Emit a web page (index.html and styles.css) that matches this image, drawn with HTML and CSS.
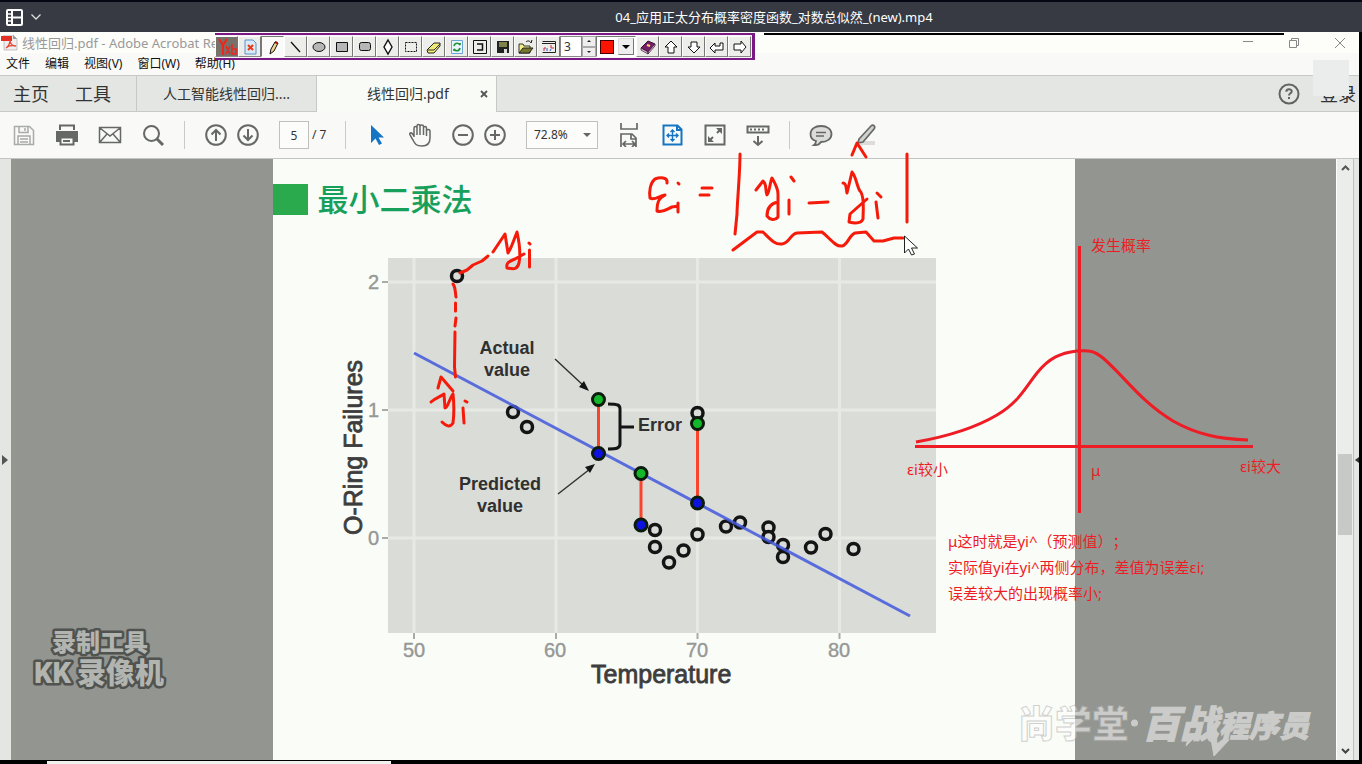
FILE: index.html
```html
<!DOCTYPE html>
<html lang="zh-CN">
<head>
<meta charset="utf-8">
<title>04_应用正太分布概率密度函数_对数总似然_(new).mp4</title>
<link rel="stylesheet" href="styles.css">
</head>
<body>
<header class="player-bar">
  <button class="player-menu" aria-label="播放列表">
    <svg width="17" height="17" viewBox="0 0 17 17" fill="none" stroke="#fff" stroke-width="2"><rect x="1" y="1" width="15" height="15" rx="1"/><path d="M6 1v15M6 8.500h10"/><path d="M1 5h4M1 8.500h4M1 12h4" stroke-width="1.500"/></svg>
    <svg width="10" height="6" viewBox="0 0 10 6" fill="none" stroke="#ddd" stroke-width="1.300"><path d="M.5 .5 5 5 9.500 .5"/></svg>
  </button>
  <h1 class="player-title">04_应用正太分布概率密度函数_对数总似然_(new).mp4</h1>
</header>

<main class="reader">
  <div class="title-bar">
    <svg width="17" height="16" viewBox="0 0 17 16"><path d="M3 0h9l4 4v11H3z" fill="#eee" stroke="#aaa" stroke-width=".7"/><path d="M0 1h11v5H0z" fill="#e33225"/><path d="M12 0v4h4" fill="#999"/><path d="M5 13c3-2 4-5 4-8 0 4 3 6 6 6-4-1-8 0-10 2z" fill="none" stroke="#e64c38" stroke-width="1.300"/></svg>
    <span class="file-name">线性回归.pdf - Adobe Acrobat Re</span>
    <span class="capture-edge"></span>
    <div class="window-buttons">
      <button aria-label="最小化"><svg width="12" height="12" stroke="#888"><path d="M1 4.500h10"/></svg></button>
      <button aria-label="还原"><svg width="12" height="12" fill="none" stroke="#888"><path d="M1.500 3.500h7v7h-7zM3.500 3.500v-2h7v7h-2"/></svg></button>
      <button aria-label="关闭"><svg width="12" height="12" stroke="#888"><path d="m1 1 10 10M11 1 1 11"/></svg></button>
    </div>
  </div>
  <nav class="menu-bar">
    <button>文件</button><button>编辑</button><button>视图(V)</button><button>窗口(W)</button><button>帮助(H)</button>
  </nav>
  <nav class="tab-bar">
    <div class="home-tabs"><button>主页</button><button>工具</button></div>
    <button class="tab">人工智能线性回归....</button>
    <button class="tab tab-active">线性回归.pdf<svg class="tab-close" width="8" height="8" stroke="#555" stroke-width="1.800"><path d="m1 1 6 6M7 1 1 7"/></svg></button>
    <div class="account">
      <button aria-label="帮助"><svg width="22" height="22" fill="none" stroke="#626462" stroke-width="2"><circle cx="11" cy="11" r="9.500"/><path d="M8.300 8.800c0-3.500 5.400-3.400 5.400-.4 0 1.900-2.700 1.900-2.700 4M11 14v2"/></svg></button>
      <button class="login">登录</button>
    </div>
  </nav>

  <div class="tool-bar">
    <button aria-label="保存"><svg viewBox="0 0 24 24" stroke="#a9aba8"><path d="M2.500 3.500h15l4 4v14h-19zM7 3.500v6h9v-6M13 5v3M6 21v-8h12v8M8 16h8M8 19h8" stroke-width="1.500"/></svg></button>
    <button aria-label="打印"><svg viewBox="0 0 24 24"><path d="M5 7V2.500h14V7"/><path d="M1 8h22v11h-4v-4H5v4H1z" fill="#666865" stroke="none"/><path d="M5.500 14.500h13v7h-13zM8 18h7" fill="#fafaf7"/></svg></button>
    <button aria-label="邮件"><svg viewBox="0 0 24 24"><path d="M1.500 4.500h21v15h-21zM2 5l10 8 10-8M2 19l7-8M22 19l-7-8" stroke-width="1.500"/></svg></button>
    <button aria-label="查找"><svg viewBox="0 0 24 24"><circle cx="10.500" cy="10.500" r="7.500"/><path d="m16 16 6 6" stroke-width="3"/></svg></button>
    <i class="rule"></i>
    <div class="pair">
      <button aria-label="上一页"><svg viewBox="0 0 24 24"><circle cx="12" cy="12" r="9.800"/><path d="M12 18V7M7.500 11.500 12 7l4.500 4.500"/></svg></button>
      <button aria-label="下一页"><svg viewBox="0 0 24 24"><circle cx="12" cy="12" r="9.800"/><path d="M12 6v11M7.500 12.500 12 17l4.500-4.500"/></svg></button>
    </div>
    <label class="page-number"><input type="text" value="5" aria-label="页码"><span>/ 7</span></label>
    <i class="rule"></i>
    <button aria-label="选择"><svg viewBox="0 0 24 24" stroke="none"><path d="M6 2v18l4.500-4.500L14 22l3-1.500-3.500-6H19z" fill="#1674c4"/></svg></button>
    <button aria-label="手形"><svg viewBox="0 0 24 24"><path d="M6 14V5c0-2 3-2 3 0v7M9 5V3c0-2 3-2 3 0v9M12 3.500c0-2 3.500-2 3.500 0V12M15.500 5c0-2 3-2 3 0v8M18.500 8c0-2 3.500-2 3.500 0v7c0 5-2 8-8 8s-7-2-9-6l-3-5c-1-2 1-3 2.500-1L6 13" stroke-width="1.500"/></svg></button>
    <div class="pair">
      <button aria-label="缩小"><svg viewBox="0 0 24 24"><circle cx="12" cy="12" r="9.800"/><path d="M7 12h10"/></svg></button>
      <button aria-label="放大"><svg viewBox="0 0 24 24"><circle cx="12" cy="12" r="9.800"/><path d="M7 12h10M12 7v10"/></svg></button>
    </div>
    <span class="zoom-level"><select aria-label="缩放比例"><option>72.8%</option></select></span>
    <button aria-label="适合宽度"><svg viewBox="0 0 24 24"><path d="M4 0v6h16V0M4 24V11h11l4 4v9M14 11v5h5M6 21h11M9 18l-3 3 3 3M15 18l3 3-3 3" stroke-width="1.700"/></svg></button>
    <button aria-label="适合页面"><svg viewBox="0 0 24 24" stroke="#1674c4"><path d="M3.500 2.500h14l4 4v15h-18zM17 2v5h5"/><path d="M12.500 7v11M7 12.500h11M10.500 9l2-2 2 2M10.500 16l2 2 2-2M9 10.500l-2 2 2 2M16 10.500l2 2-2 2" stroke-width="1.400"/></svg></button>
    <button aria-label="全屏"><svg viewBox="0 0 24 24"><path d="M2.500 2.500h19v19h-19z"/><path d="m6 18 4-4M14 10l4-4"/><path d="M5 13v6h6zM13 5h6v6z" fill="#666865" stroke="none"/></svg></button>
    <button aria-label="滚动"><svg viewBox="0 0 24 24"><path d="M1.500 3.500h21v6h-21zM12 13v9M7.500 18l4.500 4 4.500-4"/><path d="M4 6.500h16" stroke-dasharray="2 2"/></svg></button>
    <i class="rule"></i>
    <button aria-label="注释"><svg viewBox="0 0 24 24"><path d="M12 3c6 0 10.500 3 10.500 8S18 19 12 19c-2 3-4 3.500-7 3 2-1 2-2 2-4-4-1-5.500-4-5.500-7C1.500 6 6 3 12 3z" fill="#dcdddb" stroke-width="1.800"/><path d="M7 9.500h10M7 13h8" stroke-width="1.500"/></svg></button>
    <button aria-label="荧光笔"><svg viewBox="0 0 24 24"><path d="M8 18h15v4H8z" fill="#dedbdb" stroke="none"/><path d="m7 16 12-13c2-2 5 0 3 3L11 19l-5 1z" fill="#d0d2cf" stroke-width="1.700"/></svg></button>
  </div>

  <div class="workspace">
    <button class="side-strip" aria-label="展开左侧面板"><svg width="6" height="10"><path d="M0 0v10l6-5z" fill="#555"/></svg></button>
    <div class="canvas">
      <article class="sheet">
        <h2 class="sheet-title">最小二乘法</h2>
        <svg class="chart" viewBox="340 250 600 440" role="img" aria-label="O-Ring Failures / Temperature">
          <rect x="388" y="258" width="548" height="375" fill="#dadcd8"/>
          <path d="M388 282h548M388 410h548M388 538h548M414 258v375M556 258v375M697.500 258v375M839.500 258v375" stroke="#e7e9e5" stroke-width="3"/>
          <path d="M382 282h6M382 410h6M382 538h6M414 633v6M556 633v6M697.500 633v6M839.500 633v6" stroke="#aaa" stroke-width="2"/>
          <g class="tick-text">
            <text x="368" y="289">2</text><text x="368" y="417">1</text><text x="368" y="545">0</text>
            <text x="403" y="657">50</text><text x="544" y="657">60</text><text x="686" y="657">70</text><text x="828" y="657">80</text>
          </g>
          <g class="axis-text">
            <text x="591" y="683">Temperature</text>
            <text transform="translate(362 535) rotate(-90)">O-Ring Failures</text>
          </g>
          <g class="callout-text">
            <text x="507" y="354">Actual</text><text x="507" y="376">value</text>
            <text x="500" y="490">Predicted</text><text x="500" y="512">value</text>
            <text x="660" y="431">Error</text>
          </g>
          <path d="M598.500 400v53M641 474v51M697.500 424v79" stroke="#f9452c" stroke-width="3"/>
          <g fill="#dadcd8" stroke="#141414" stroke-width="3.500">
            <circle cx="457" cy="276" r="5.500"/><circle cx="513" cy="412" r="5.500"/><circle cx="527" cy="427" r="5.500"/><circle cx="697.500" cy="413" r="5.500"/>
            <circle cx="655" cy="530" r="5.500"/><circle cx="655" cy="547" r="5.500"/><circle cx="669" cy="562.500" r="5.500"/><circle cx="683.500" cy="550.500" r="5.500"/>
            <circle cx="697.500" cy="534.500" r="5.500"/><circle cx="726" cy="526.500" r="5.500"/><circle cx="740" cy="522.500" r="5.500"/><circle cx="768.500" cy="527.500" r="5.500"/>
            <circle cx="768.500" cy="537" r="5.500"/><circle cx="783" cy="545" r="5.500"/><circle cx="783" cy="557" r="5.500"/><circle cx="811" cy="547.500" r="5.500"/>
            <circle cx="825.500" cy="534" r="5.500"/><circle cx="853.500" cy="549" r="5.500"/>
          </g>
          <path d="m414 353 496 263" stroke="#4258dd" stroke-width="3" stroke-opacity=".85"/>
          <g stroke="#0c1c0c" stroke-width="3">
            <circle cx="598.500" cy="399.500" r="6" fill="#12b829"/><circle cx="641" cy="473.500" r="6" fill="#12b829"/><circle cx="697.500" cy="423.500" r="6" fill="#12b829"/>
            <circle cx="598.500" cy="453.500" r="6" fill="#0d12e0"/><circle cx="641" cy="525" r="6" fill="#0d12e0"/><circle cx="697.500" cy="503" r="6" fill="#0d12e0"/>
          </g>
          <path d="M608 404c10 0 12 1 12 5v35c0 4-3 5-12 5M620 427h14" fill="none" stroke="#141414" stroke-width="3"/>
          <path d="m555 359 29 27M558 494l32-25" stroke="#333" stroke-width="1.500"/>
          <path d="m589 391-10-4 5-6zM595 464l-10 3 5 6z" fill="#141414"/>
        </svg>

        <svg class="ink" viewBox="273 159 802 601">
          <g class="pen">
            <path d="m460 273 7-3 6-5 9-4 6-5M493 252l12-18 3 19c4-6 6-14 9-21 2 9 4 21 2 31-2 7-5 6-12 5-1-5 1-6 8-9l9-5M529 243l1 1M529.500 250v17"/>
            <path d="M453 284c3 4 2 9 3 13M455.500 303v8M456 318l-1 8M455 332l-.5 35 1 10M438 388l3-11 12 14M431 402c4-4 9-5 13-8l1 14c3 0 4-9 8-14 1 9 1 21 0 29-3 5-7 3-11-1M465 401l2 1M463 408l1 15"/>
            <path d="M667 183c1-6-7-6-12-4-5 4-6 13-5 19 4 3 9-2 15-3-5 3-8 5-8 16 6 2 10-2 15-4l6-1M678 183l1 1M678 203v9M702 188h10M700 195h9"/>
            <path d="M740 154c0 20-3 50-3 60l-2 20M756 190l7-9c4 3 2 9 4 14 2 0 3-13 5-17 3 5 6 10 6 16v23c-3 4-8 3-11-1 0-10 5-13 11-14M791 177l3 4M789 200v14M809 203l19-1"/>
            <path d="M843 183c4 0 3 7 4 10l5-21c4 4 5 15 8 19 5 5 3 21 3 28-2 5-10 4-14 3l1-8 17-15M877 193l4 4M876 202l2 16M907 154v68M852 155l5-12 9 14"/>
            <path d="m733 250 24-18h6c7 7 12 13 19 12 8-1 8-10 15-11l25-1c8 6 13 15 20 14 6-1 7-11 13-13l11-1 8 9h9l11-3h9"/>
          </g>
          <path d="M904.500 236v17l4-4 3 6 3-1-3-6h6z" fill="#fff" stroke="#222"/>
          <g class="bell">
            <path d="M1079.500 246v267M915 446.500h338"/>
            <path d="M916 442C950 436 975 428 997 415S1025 388 1037 373 1060 353 1077 351c13-1 17 0 26 7 22 19 38 44 70 63 23 13 45 18 75 19"/>
          </g>
          <g class="note-text">
            <text x="1091" y="251">发生概率</text><text x="907" y="475">εi较小</text><text x="1240" y="472">εi较大</text><text x="1091" y="476">μ</text>
            <text x="948" y="547">μ这时就是yi^（预测值）；</text>
            <text x="948" y="573">实际值yi在yi^两侧分布，差值为误差εi;</text>
            <text x="948" y="599">误差较大的出现概率小;</text>
          </g>
          <g class="recorder-mark">
            <text x="52" y="651" font-size="24">录制工具</text>
            <text class="latin-mark" x="34" y="683" font-size="29">KK</text><text x="77" y="684" font-size="29">录像机</text>
          </g>
          <g class="school-mark">
            <text class="school-name" x="1018" y="738" font-size="37">尚学堂</text><circle cx="1134.500" cy="723" r="3.500"/>
            <g class="school-slogan"><text x="1142" y="738" font-size="38">百战</text><text x="1219" y="737" font-size="30">程序员</text>
            <path d="m1189 735-3 11 14-14zM1209 728l5 28 15-16h-7l-5 4-1-16z"/></g>
          </g>
        </svg>
      </article>
    </div>
    <div class="scroll-track">
      <svg width="9" height="6" fill="none" stroke="#555" stroke-width="2"><path d="m1 5 3.500-3.500L8 5"/></svg>
      <span class="track-above"></span><span class="thumb"></span><span class="track-below"></span>
      <svg width="9" height="6" fill="none" stroke="#444" stroke-width="2"><path d="m1 1 3.500 3.500L8 1"/></svg>
    </div>
    <button class="side-strip side-strip-right" aria-label="展开右侧面板"><svg width="4" height="6"><path d="M4 0v6L0 3z" fill="#333"/></svg></button>
  </div>

  <div class="recorder" role="toolbar" aria-label="录屏画笔">
    <button class="brand" aria-label="Yxb"><svg viewBox="0 0 20 18" fill="none" stroke="#f0241b" stroke-width="2.200"><path d="M2 1l4 6 4-6M6 7v10"/><path d="m9 8 4 8M13 8l-4 8M15 6v10h4v-5h-3" stroke-width="1.500"/></svg></button>
    <button aria-label="清除"><svg viewBox="0 0 20 18"><path d="M5 2h8l3 3v11H5z" fill="#d7eafc" stroke="#5d91c8"/><path d="m8 7 5 5M13 7l-5 5" stroke="#ea3a12" stroke-width="2"/></svg></button>
    <button class="pressed" aria-label="铅笔"><svg viewBox="0 0 20 18"><path d="m7 16 1-5 4-7 3 1-4 8z" fill="#f0d494" stroke="#111"/><path d="m12 4 2 1" stroke="#a00" stroke-width="2"/></svg></button>
    <button aria-label="直线"><svg viewBox="0 0 20 18"><path d="m5 4 9 10" stroke="#111" stroke-width="1.300"/></svg></button>
    <button aria-label="椭圆"><svg viewBox="0 0 20 18"><ellipse cx="10" cy="9" rx="6" ry="4.500" fill="#b6b6b6" stroke="#111"/></svg></button>
    <button aria-label="矩形"><svg viewBox="0 0 20 18"><path d="M4.500 4.500h11v9h-11z" fill="#b6b6b6" stroke="#111"/></svg></button>
    <button aria-label="圆角矩形"><svg viewBox="0 0 20 18"><rect x="4.500" y="4.500" width="11" height="8" rx="2" fill="#b6b6b6" stroke="#111"/></svg></button>
    <button aria-label="菱形"><svg viewBox="0 0 20 18"><path d="m10 2 4 7-4 7-4-7z" fill="#fff" stroke="#111" stroke-width="1.400"/></svg></button>
    <button aria-label="选区"><svg viewBox="0 0 20 18"><path d="M4.500 4.500h11v9h-11z" fill="none" stroke="#111" stroke-dasharray="2 1"/></svg></button>
    <button aria-label="橡皮"><svg viewBox="0 0 20 18"><path d="m3 12 7-7h6v3l-6 7H4z" fill="#f1ea79" stroke="#222"/><path d="m4 12h6l6-6" fill="none" stroke="#333"/></svg></button>
    <button aria-label="刷新"><svg viewBox="0 0 20 18"><path d="M4.500 2.500h11v13h-11z" fill="#eaf5ff" stroke="#6aa5d5"/><path d="M7 8c1-4 5-3 6-1V5M13 10c-1 4-5 3-6 1v2" fill="none" stroke="#219531" stroke-width="1.700"/></svg></button>
    <button aria-label="还原"><svg viewBox="0 0 20 18" fill="none" stroke="#111"><path d="M3.500 2.500h13v13h-13z"/><path d="M7 6h5.500v6H7" stroke-width="1.500"/></svg></button>
    <button aria-label="保存画面"><svg viewBox="0 0 20 18"><path d="M4 3h12v12H4z" fill="#222"/><path d="M6 4h8v5H6z" fill="#80824a"/><path d="M11 11h3v4h-3z" fill="#ddd"/></svg></button>
    <button aria-label="打开"><svg viewBox="0 0 20 18"><path d="M3 15V6h4l1 2h6v7z" fill="#f3ef87" stroke="#333"/><path d="m3 15 4-5h10l-4 5z" fill="#77762b" stroke="#222"/><path d="M10 4c2-2 4-1 5 1l1-3" fill="none" stroke="#111"/></svg></button>
    <button aria-label="设置"><svg viewBox="0 0 20 18" fill="none" stroke="#222"><path d="M3.500 3.500h13v11h-13M3 5.500h13"/><path d="M5 13v-3h2M12 7v3h3" stroke="#c72a36"/><path d="M8 13v-3M11 13l1-2" stroke="#285cc9"/></svg></button>
    <input class="pen-size" type="text" value="3" aria-label="画笔粗细">
    <span class="stepper"><button aria-label="增大"><i class="up"></i></button><button aria-label="减小"><i class="down"></i></button></span>
    <button class="pen-color" aria-label="画笔颜色"><span class="swatch"></span><span class="drop"><i></i></span></button>
    <button aria-label="帮助手册"><svg viewBox="0 0 20 18"><path d="m3 10 7-7 7 3-7 8z" fill="#7a1d68" stroke="#301030"/><path d="m3 10 7 4v2l-7-4zM10 14l7-8v2l-7 8z" fill="#e2c7d7" stroke="#301030" stroke-width=".7"/><path d="m9 7 3 1" stroke="#f4e05b" stroke-width="2"/></svg></button>
    <button aria-label="上移"><svg viewBox="0 0 20 18"><path d="m10 3 6 6h-3v6H7V9H4z" fill="#fff" stroke="#111"/></svg></button>
    <button aria-label="下移"><svg viewBox="0 0 20 18"><path d="m10 15 6-6h-3V4H7v5H4z" fill="#fff" stroke="#111"/></svg></button>
    <button aria-label="回车"><svg viewBox="0 0 20 18"><path d="m3 10 5-5v3h5V5h3v7H8v3z" fill="#fff" stroke="#111"/></svg></button>
    <button aria-label="右移"><svg viewBox="0 0 20 18"><path d="m16 9-5-6v3H4v6h7v3z" fill="#fff" stroke="#111"/></svg></button>
  </div>
</main>
<footer class="desktop-edge"><span></span></footer>
</body>
</html>
```
FILE: styles.css
```css
* { box-sizing: border-box; }
body {
  margin: 0;
  height: 100vh;
  display: flex;
  flex-direction: column;
  overflow: hidden;
  background: #000;
  border-top: 2px solid #050812;
  font-family: "Noto Sans", "Noto Sans CJK SC", sans-serif;
  color: #333;
}
button, input, select { font: inherit; color: inherit; border: 0; padding: 0; margin: 0; background: none; }
svg { display: block; flex: none; }

.player-bar {
  height: 30px;
  display: grid;
  grid-template-columns: 1fr auto 1fr;
  align-items: center;
  padding: 0 6px;
  background: #373a43;
}
.player-menu { display: flex; align-items: center; gap: 8px; justify-self: start; }
.player-title { grid-column: 2; margin: 0; padding-left: 186px; font-size: 13px; line-height: 20px; font-weight: 400; color: #fff; white-space: nowrap; }

.reader {
  position: relative;
  flex: 1;
  min-height: 0;
  display: flex;
  flex-direction: column;
  margin-right: 3px;
  background: #fafbf7;
}
.title-bar { position: relative; height: 21px; display: flex; align-items: center; padding-left: 1px; gap: 4px; background: #fdfdf9; }
.file-name { font-size: 13px; line-height: 20px; color: #999; white-space: nowrap; }
.capture-edge { position: absolute; left: 764px; right: 75px; top: 1px; height: 2px; background: #000; }
.window-buttons { display: flex; gap: 34px; margin-left: auto; padding-right: 13px; }
.menu-bar { height: 22px; display: flex; align-items: center; gap: 15px; padding-left: 6px; font-size: 12px; line-height: 20px; color: #111; background: #f9faf8; }

.tab-bar { height: 37px; display: flex; border: solid #c7c9c6; border-width: 1px 0; background: #e4e6e3; }
.home-tabs { width: 136px; display: flex; align-items: center; gap: 26px; padding-left: 13px; font-size: 18px; line-height: 24px; }
.tab { width: 180px; border-left: 1px solid #c7c9c6; font-size: 14px; line-height: 20px; }
.tab-active { display: flex; align-items: center; width: 181px; height: 36px; padding: 0 8px 0 50px; border-right: 1px solid #c7c9c6; background: #f9fbf7; }
.tab-close { margin-left: auto; }
.account { display: flex; align-items: center; gap: 20px; margin-left: auto; padding-right: 3px; }
.login { position: relative; font-size: 18px; line-height: 26px; }
.login::before { content: ""; position: absolute; left: -7px; bottom: 11px; width: 36px; height: 36px; background: #ebedec; }

.tool-bar { height: 47px; display: flex; align-items: center; gap: 19px; padding-left: 12px; border-bottom: 1px solid #c3c5c2; background: #f9faf7; font-size: 12px; line-height: 18px; }
.tool-bar svg { width: 24px; height: 24px; fill: none; stroke-width: 2; }
.tool-bar svg:not([stroke]) { stroke: #666865; }
.rule { width: 1px; height: 28px; background: #c9cbc8; }
.pair { display: flex; gap: 8px; }
.page-number { display: flex; align-items: center; gap: 3px; width: 47px; white-space: nowrap; }
.page-number input { width: 30px; height: 28px; border: 1px solid #bfc1be; text-align: center; background: #fcfdfa; }
.zoom-level { position: relative; width: 72px; height: 28px; }
.zoom-level select { width: 100%; height: 100%; padding-left: 7px; border: 1px solid #bfc1be; appearance: none; background: #fcfdfa; }
.zoom-level::after { content: ""; position: absolute; right: 7px; top: 12px; border: solid transparent; border-width: 4px 4px 0; border-top-color: #666; pointer-events: none; }

.workspace { flex: 1; min-height: 0; display: flex; }
.side-strip { width: 11px; display: flex; align-items: center; padding-left: 2px; background: #e3e6e2; border-right: 2px solid #e8e4de; }
.side-strip-right { width: 6px; padding: 0 0 0 1px; border: solid #bfc1be; border-width: 0 0 0 1px; }
.canvas { flex: 1; display: flex; justify-content: center; background: #939590; }
.sheet { position: relative; flex: 0 1 802px; padding-top: 22px; background: #fafcf7; }
.sheet-title { display: flex; align-items: center; gap: 10px; margin: 0; font-size: 31px; line-height: 36px; font-weight: 500; color: #17a05c; }
.sheet-title::before { content: ""; width: 35px; height: 31px; background: #2aaa4c; }
.chart { width: 600px; max-width: 100%; margin: 33px 0 0 67px; font-family: "Liberation Sans", Arial, sans-serif; }
.tick-text { font-size: 20px; fill: #969896; stroke: #969896; stroke-width: .4; }
.axis-text { font-size: 25px; fill: #3d3d3d; stroke: #3d3d3d; stroke-width: .8; }
.callout-text { font-size: 18px; font-weight: 700; fill: #303030; text-anchor: middle; }
.ink { position: absolute; left: 0; top: 0; z-index: 2; width: 802px; height: 601px; overflow: visible; pointer-events: none; }
.pen { fill: none; stroke: #f51b0b; stroke-width: 3; stroke-linecap: round; stroke-linejoin: round; }
.bell { fill: none; stroke: #ee1c25; stroke-width: 3; }
.note-text { font-size: 15px; fill: #ee1c25; text-spacing-trim: space-all; }
.recorder-mark { font-family: "Noto Sans CJK SC", sans-serif; font-weight: 900; fill: #b2b4b0; stroke: #50534f; stroke-width: 5; stroke-linejoin: round; paint-order: stroke; }
.latin-mark { font-family: Roboto, sans-serif; }
.school-mark { font-family: "Noto Sans CJK SC", sans-serif; font-weight: 900; fill: #fff; opacity: .52; }
.school-name { stroke: #aaa; stroke-width: 1; }
.school-slogan { font-style: italic; stroke: #fff; stroke-width: 1; }

.scroll-track { width: 17px; display: flex; flex-direction: column; align-items: center; padding: 6px 0; border-left: 1px solid #fff; background: #ebedea; }
.track-above { flex: 283; }
.thumb { flex: 81; width: 14px; background: #c7c9c6; }
.track-below { flex: 213; }

.recorder { position: absolute; left: 215px; top: 1px; z-index: 3; display: flex; height: 27px; padding: 1px 1px 1px 0; border: solid #7b1984; border-width: 2px 3px 2px 0; background: #f7f3f6; }
.recorder > button { width: 23px; display: flex; align-items: center; justify-content: center; border: 1px solid; border-color: #fff #777 #888 #fff; background: #edeeea; }
.recorder > button svg { width: 20px; height: 18px; }
.recorder > .brand { background: #77716c; }
.recorder > .pressed { border-color: #777 #fff #fff #777; background: #fafaf8; }
.pen-size { width: 22px; padding-left: 3px; border: 1px solid #888; background: #fff; font-size: 12px; line-height: 16px; }
.stepper { width: 14px; display: flex; flex-direction: column; }
.stepper button { flex: 1; display: flex; align-items: center; justify-content: center; border: 1px solid #aaa; background: #eee; }
.stepper i { border: solid transparent; border-width: 0 2px 2px; border-bottom-color: #222; }
.stepper .down { border-width: 2px 2px 0; border-top-color: #222; }
.recorder > .pen-color { width: 40px; justify-content: space-between; padding: 1px 1px 1px 3px; border-color: #777 #fff #fff #777; background: #fff; }
.swatch { width: 14px; height: 14px; border: 1px solid #400; background: #fb1400; }
.drop { width: 16px; height: 100%; display: flex; align-items: center; justify-content: center; border: 1px solid; border-color: #ddd #777 #777 #ddd; background: #eee; }
.drop i { border: solid transparent; border-width: 4px 4px 0; border-top-color: #000; }

.desktop-edge { height: 4px; padding: 1px 0 0 47px; }
.desktop-edge span { display: block; width: 344px; height: 3px; background: #f1f2f0; }
```
